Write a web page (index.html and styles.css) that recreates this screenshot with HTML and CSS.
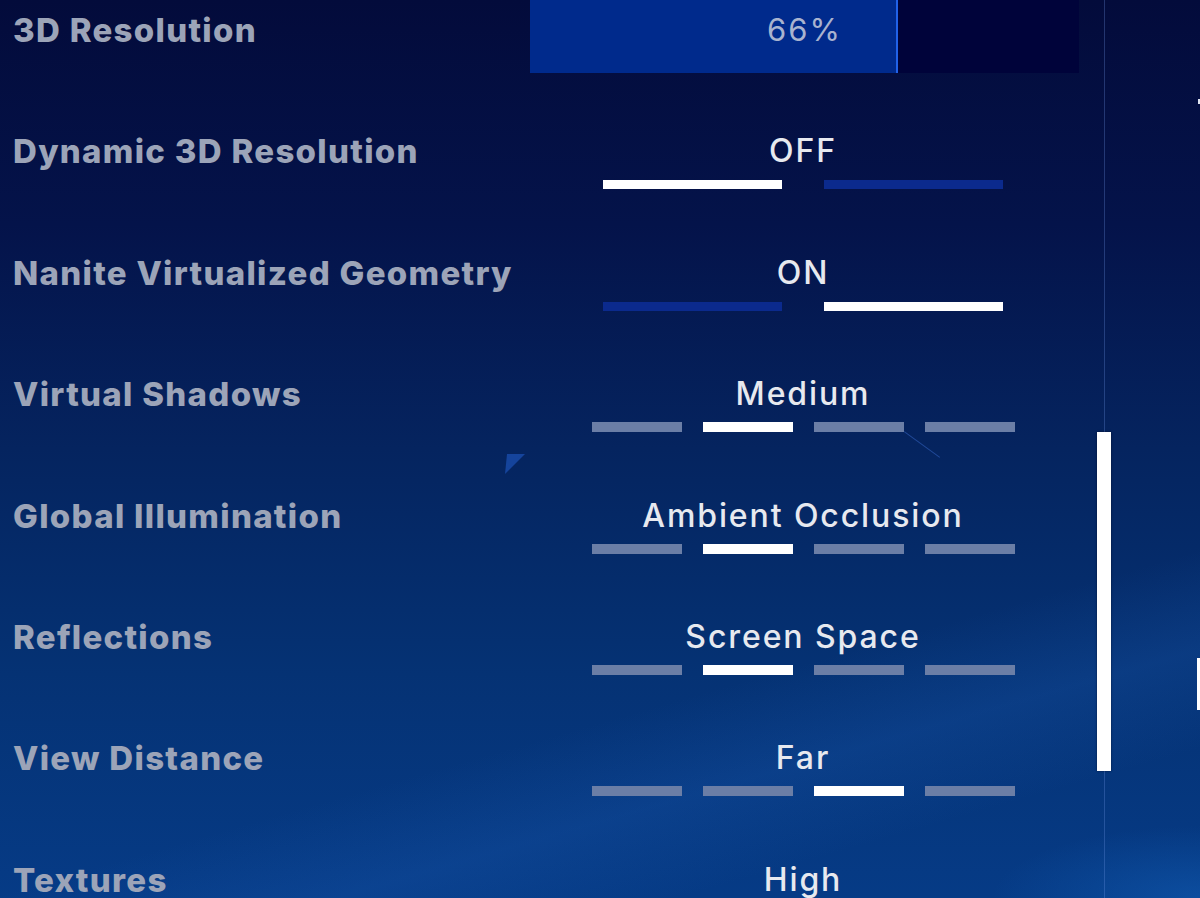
FILE: index.html
```html
<!DOCTYPE html>
<html lang="en">
  <head>
    <meta charset="UTF-8" />
    <meta name="viewport" content="width=device-width, initial-scale=1.0" />
    <title>Video Settings</title>
    <link rel="stylesheet" href="styles.css">
  </head>
  <body>
    <!-- background bits -->
    <svg class="shard" width="24" height="24" viewBox="0 0 24 24"><polygon points="4,2 22,2 2,22" fill="#1b4fb0" opacity="0.75"/></svg>
    <div class="streak"></div>

    <div class="page">
      <!-- settings list -->
      <div class="settings">
        <div class="row">
          <div class="label">3D Resolution</div>
          <div class="control">
            <div class="slider">
              <div class="slider-fill" style="width: 67%"></div>
              <div class="slider-value">66%</div>
            </div>
          </div>
        </div>

        <div class="row">
          <div class="label">Dynamic 3D Resolution</div>
          <div class="control">
            <div class="value">OFF</div>
            <div class="toggle">
              <div class="bar on"></div>
              <div class="bar"></div>
            </div>
          </div>
        </div>

        <div class="row">
          <div class="label">Nanite Virtualized Geometry</div>
          <div class="control">
            <div class="value">ON</div>
            <div class="toggle">
              <div class="bar"></div>
              <div class="bar on"></div>
            </div>
          </div>
        </div>

        <div class="row">
          <div class="label">Virtual Shadows</div>
          <div class="control">
            <div class="value">Medium</div>
            <div class="steps">
              <div class="step"></div>
              <div class="step on"></div>
              <div class="step"></div>
              <div class="step"></div>
            </div>
          </div>
        </div>

        <div class="row">
          <div class="label">Global Illumination</div>
          <div class="control">
            <div class="value">Ambient Occlusion</div>
            <div class="steps">
              <div class="step"></div>
              <div class="step on"></div>
              <div class="step"></div>
              <div class="step"></div>
            </div>
          </div>
        </div>

        <div class="row">
          <div class="label">Reflections</div>
          <div class="control">
            <div class="value">Screen Space</div>
            <div class="steps">
              <div class="step"></div>
              <div class="step on"></div>
              <div class="step"></div>
              <div class="step"></div>
            </div>
          </div>
        </div>

        <div class="row">
          <div class="label">View Distance</div>
          <div class="control">
            <div class="value">Far</div>
            <div class="steps">
              <div class="step"></div>
              <div class="step"></div>
              <div class="step on"></div>
              <div class="step"></div>
            </div>
          </div>
        </div>

        <div class="row">
          <div class="label">Textures</div>
          <div class="control">
            <div class="value">High</div>
            <div class="steps">
              <div class="step"></div>
              <div class="step"></div>
              <div class="step"></div>
              <div class="step on"></div>
            </div>
          </div>
        </div>
      </div>

      <!-- scrollbar -->
      <div class="scroll">
        <div class="thumb"></div>
      </div>

      <!-- next panel, cut off at the edge -->
      <div class="side">
        <div class="tick"></div>
        <div class="edge"></div>
      </div>
    </div>
  </body>
</html>
```

FILE: styles.css
```css
html,
body {
  margin: 0;
  height: 100%;
}
body {
  width: 1200px;
  height: 898px;
  overflow: hidden;
  position: relative;
  font-family: Inter, "Noto Sans", sans-serif;
  background:
    linear-gradient(164deg, transparent 72%, rgba(30, 95, 185, 0.22) 80%, transparent 88%),
    radial-gradient(ellipse 260px 90px at 1200px 898px, rgba(20, 100, 190, 0.45), transparent 80%),
    linear-gradient(180deg, #030b3b 0%, #04134a 25%, #05245f 50%, #053274 75%, #063b86 100%);
}

.page {
  display: grid;
  grid-template-columns: 1097px 14px 1fr;
  height: 100%;
}

/* left column: the list of options */
.settings {
  padding-top: 10px;
  padding-left: 13px;
}
.row {
  height: 121.4px;
  display: grid;
  grid-template-columns: 517px 549px;
  align-items: start;
}
.label {
  font-size: 33px;
  font-weight: 800;
  line-height: 40px;
  letter-spacing: 1.3px;
  color: #9ca4b8;
  white-space: nowrap;
}
.control {
  display: flex;
  flex-direction: column;
  align-items: center;
}
.value {
  font-size: 32px;
  font-weight: 500;
  line-height: 40px;
  letter-spacing: 1.9px;
  margin-right: 3px;
  color: #e7e9ef;
  white-space: nowrap;
}

/* slider */
.slider {
  position: relative;
  width: 549px;
  height: 85px;
  margin-top: -22px;
  background: #00033a;
}
.slider-fill {
  height: 100%;
  background: #002a8c;
  border-right: 2px solid #2262e8;
  box-sizing: border-box;
}
.slider-value {
  position: absolute;
  top: 22px;
  left: 0;
  width: 100%;
  text-align: center;
  font-size: 31px;
  line-height: 40px;
  letter-spacing: 2px;
  color: #a9b3cf;
}

/* on/off bars */
.toggle {
  display: flex;
  gap: 42px;
  margin-top: 9px;
  margin-right: 3px;
}
.bar {
  width: 179px;
  height: 9px;
  background: #0b2a8d;
}
.bar.on {
  background: #ffffff;
}

/* quality steps */
.steps {
  display: flex;
  gap: 21px;
  margin-top: 8px;
  margin-right: 3px;
}
.step {
  width: 90px;
  height: 10px;
  background: #6b7ea6;
}
.step.on {
  background: #ffffff;
}

/* scrollbar */
.scroll {
  position: relative;
}
.scroll::before {
  content: "";
  position: absolute;
  top: 0;
  bottom: 0;
  left: 7px;
  width: 1px;
  background: rgba(110, 150, 230, 0.3);
}
.thumb {
  position: relative;
  margin-top: 432px;
  height: 339px;
  background: #ffffff;
  box-shadow: 0 0 2px rgba(0, 0, 20, 0.6);
}

.side {
  display: flex;
  flex-direction: column;
  align-items: flex-end;
}
.tick {
  width: 2px;
  height: 5px;
  margin-top: 99px;
  background: #dfe4f0;
}
.edge {
  width: 3px;
  height: 52px;
  margin-top: 554px;
  background: #ffffff;
}

/* faint shapes in the backdrop */
.shard {
  position: absolute;
  left: 503px;
  top: 452px;
}
.streak {
  position: absolute;
  left: 900px;
  top: 444px;
  width: 44px;
  height: 1px;
  background: rgba(60, 110, 210, 0.5);
  transform: rotate(36deg);
}
```
